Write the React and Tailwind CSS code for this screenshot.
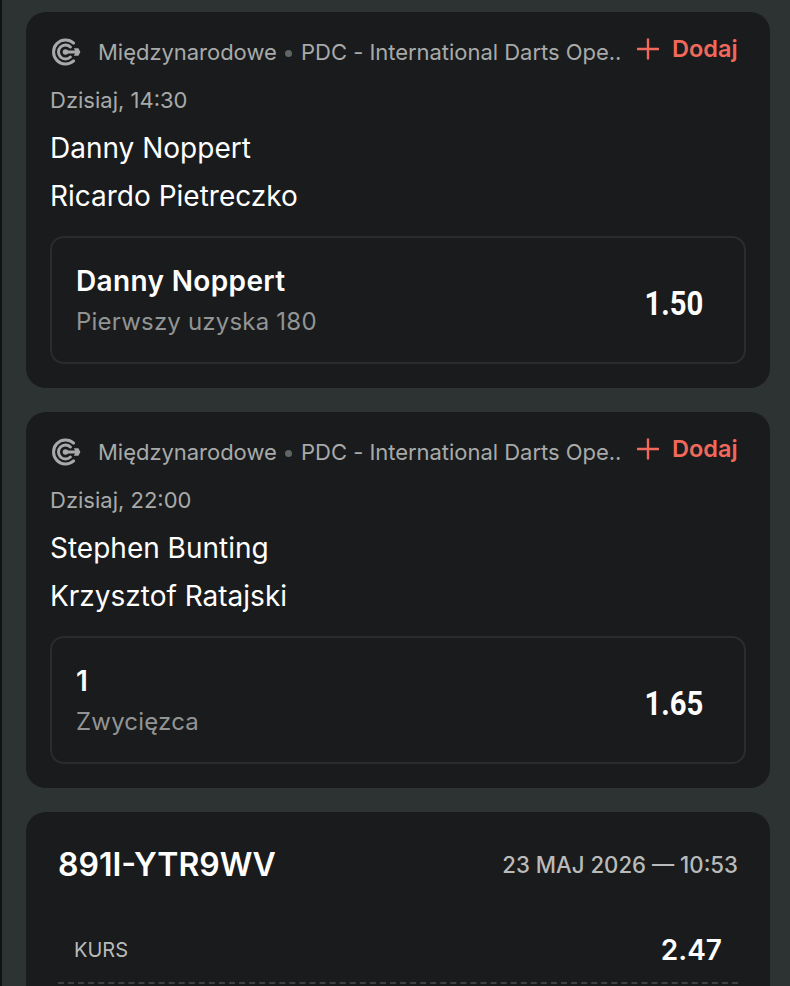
const Target = () => (
  <svg width="31" height="28" viewBox="0 0 31 28" fill="none" className="shrink-0">
    <path d="M23.6 5.1A12 12 0 1 0 23.6 22.9" stroke="#a8aaaa" strokeWidth="3" strokeLinecap="round" />
    <path d="M20.4 9A7 7 0 1 0 20.4 19" stroke="#a8aaaa" strokeWidth="3" strokeLinecap="round" />
    <circle cx="15.5" cy="14" r="2.8" fill="#a8aaaa" />
    <path d="M15 12.5H25L23.8 10.2H28.4L30.4 14L28.4 17.8H23.8L25 15.5H15Z" fill="#a8aaaa" />
  </svg>
);

const Plus = () => (
  <svg width="24" height="24" viewBox="0 0 24 24" fill="none" className="shrink-0">
    <path d="M12 1.5V22.5M1 12H23" stroke="#f0695a" strokeWidth="2.4" />
  </svg>
);

const Card = ({ time, a, b, pick, market, odds }) => (
  <section className="h-[376px] rounded-[20px] bg-[#191b1c] px-6 pt-5">
    <div className="flex h-10 items-center">
      <Target />
      <span className="ml-[17px] w-[526px] shrink-0 overflow-hidden text-[22px] leading-10 tracking-[-0.03px] whitespace-nowrap text-[#a8aaaa]">
        Międzynarodowe <span className="mx-[2.5px] inline-block h-[7px] w-[7px] rounded-full bg-[#5f6564] align-[3px]" /> PDC - International Darts Ope..
      </span>
      <div className="ml-[12px] flex -translate-y-[3px] items-center gap-[12px]">
        <Plus />
        <span className="text-[23.5px] leading-7 font-semibold text-[#f0695a]">Dodaj</span>
      </div>
    </div>
    <p className="mt-3 text-[22px] leading-8 text-[#a8aaaa]">{time}</p>
    <p className="mt-[12px] text-[28px] leading-10 text-white">{a}</p>
    <p className="mt-[8px] text-[28px] leading-10 text-white">{b}</p>
    <div className="mt-5 flex h-[128px] items-center justify-between rounded-[14px] border-2 border-[#2a2d2f] pr-[41px] pl-[24px]">
      <div className="mb-[2px]">
        <p className="text-[28px] leading-10 font-semibold tracking-[0.35px] text-white">{pick}</p>
        <p className="mt-[5px] text-[24px] leading-8 tracking-[0.2px] text-[#929494]">{market}</p>
      </div>
      <span className="origin-right translate-y-[3px] scale-x-[0.86] font-['Roboto'] text-[34px] font-bold text-white">{odds}</span>
    </div>
  </section>
);

export default function App() {
  return (
    <main className="h-[986px] w-[790px] overflow-hidden border-l-2 border-[#0f1312] bg-[#2c3332] pt-3 pr-5 pl-6 font-['Inter',sans-serif]">
      <div className="flex flex-col gap-6">
        <Card time="Dzisiaj, 14:30" a="Danny Noppert" b="Ricardo Pietreczko" pick="Danny Noppert" market="Pierwszy uzyska 180" odds="1.50" />
        <Card time="Dzisiaj, 22:00" a="Stephen Bunting" b="Krzysztof Ratajski" pick="1" market="Zwycięzca" odds="1.65" />
        <section className="h-[300px] rounded-[20px] bg-[#191b1c] px-8 pt-7">
          <div className="flex items-center justify-between">
            <span className="text-[32px] leading-[50px] font-semibold text-white">891I-YTR9WV</span>
            <span className="text-[22.2px] font-medium text-[#b9baba]">23 MAJ 2026 — 10:53</span>
          </div>
          <div className="mt-[39px] flex items-center justify-between pr-4 pl-4">
            <span className="text-[20px] text-[#b9baba]">KURS</span>
            <span className="text-[28px] font-semibold text-white">2.47</span>
          </div>
          <div className="mt-[11px] border-t-2 border-dashed border-[#3c4042]" />
        </section>
      </div>
    </main>
  );
}
